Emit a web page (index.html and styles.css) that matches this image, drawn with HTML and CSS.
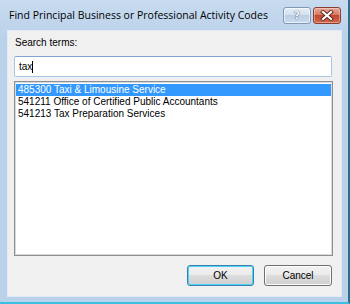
FILE: index.html
```html
<!DOCTYPE html>
<html>
<head>
<meta charset="utf-8">
<link rel="stylesheet" href="styles.css">
</head>
<body>
<div class="window">
  <div class="titlebar">
    <span class="title">Find Principal Business or Professional Activity Codes</span>
    <div class="caption-buttons">
      <div class="cap-btn help"><span class="help-glyph">?</span></div>
      <div class="cap-btn close">
        <svg width="14" height="11" viewBox="0 0 14 11">
          <path d="M3 2 L11 9 M11 2 L3 9" stroke="#5a2a20" stroke-width="4" stroke-linecap="square"/>
          <path d="M3 2 L11 9 M11 2 L3 9" stroke="#ffffff" stroke-width="2.2" stroke-linecap="square"/>
        </svg>
      </div>
    </div>
  </div>
  <div class="client">
    <div class="label">Search terms:</div>
    <div class="textbox"><span class="typed">tax</span><span class="caret"></span></div>
    <div class="listbox">
      <div class="item selected">485300 Taxi &amp; Limousine Service</div>
      <div class="item">541211 Office of Certified Public Accountants</div>
      <div class="item">541213 Tax Preparation Services</div>
    </div>
    <div class="buttons">
      <div class="btn default">OK</div>
      <div class="btn cancel">Cancel</div>
    </div>
  </div>
</div>
</body>
</html>
```
FILE: styles.css
```css
html, body {
  margin: 0;
  padding: 0;
  width: 350px;
  height: 304px;
  overflow: hidden;
  background: #bcd3ec;
}
.window {
  width: 350px;
  height: 304px;
  box-sizing: border-box;
  background: linear-gradient(#c8dbef, #bad1ea 40px, #bad1ea);
  border-right: 2px solid #2c6f8c;
  border-bottom: 2px solid #3cbfe0;
  padding: 0 6px 5px 7px;
  display: flex;
  flex-direction: column;
}
.titlebar {
  height: 30px;
  display: flex;
  justify-content: space-between;
  align-items: flex-start;
  padding-left: 2px;
  box-sizing: border-box;
}
.title {
  font-family: "Open Sans", "Noto Sans", sans-serif;
  font-size: 10.5px;
  line-height: 14px;
  padding-top: 8px;
  color: #000;
}
.caption-buttons {
  display: flex;
  gap: 2px;
  padding-top: 7px;
  margin-right: 1px;
}
.cap-btn {
  width: 28px;
  height: 17px;
  box-sizing: border-box;
  border-radius: 3px;
  display: flex;
  align-items: center;
  justify-content: center;
}
.help {
  border: 1px solid #7f98b5;
  background: linear-gradient(#e6eef8, #d3e0f0 45%, #bccfe6 50%, #c9daee);
  box-shadow: inset 0 0 0 1px rgba(255,255,255,0.6);
}
.help-glyph {
  font-family: "DejaVu Sans", sans-serif;
  font-weight: bold;
  font-size: 11px;
  line-height: 11px;
  color: #f4f7fb;
  text-shadow: 0 0 1px #4a5a70, 0 0 1px #4a5a70;
}
.close {
  border: 1px solid #8b3d2f;
  background: linear-gradient(#e9a796, #d77a63 45%, #c5472c 50%, #d06a4f);
  box-shadow: inset 0 0 0 1px rgba(255,255,255,0.35);
}
.client {
  flex: 1;
  background: #f0f0f0;
  border: 1px solid #e2ebf5;
  box-sizing: border-box;
  padding: 6px 8px 10px 6px;
  display: flex;
  flex-direction: column;
}
.label {
  font-family: "Liberation Sans", Arial, sans-serif;
  font-size: 10px;
  line-height: 12px;
  height: 12px;
  margin-left: 1px;
  margin-bottom: 7px;
  color: #000;
}
.textbox {
  height: 21px;
  margin-right: 1px;
  box-sizing: border-box;
  background: #fff;
  border: 1px solid #a8c6e4;
  border-top-color: #7fa6d0;
  border-radius: 2px;
  display: flex;
  align-items: center;
  padding-left: 4px;
  font-family: "Liberation Sans", Arial, sans-serif;
  font-size: 10px;
  color: #000;
}
.caret {
  width: 1px;
  height: 12px;
  background: #000;
}
.listbox {
  margin-top: 4px;
  height: 175px;
  box-sizing: border-box;
  background: #fff;
  border: 1px solid #8d8f92;
  box-shadow: inset 0 0 0 1px #d9d9d9;
  padding: 2px 1px;
  font-family: "Liberation Sans", Arial, sans-serif;
  font-size: 10px;
}
.item {
  height: 12px;
  line-height: 12px;
  padding-left: 2px;
  color: #000;
  white-space: nowrap;
}
.item.selected {
  background: #3399ff;
  color: #fff;
}
.buttons {
  margin-top: 9px;
  display: flex;
  justify-content: flex-end;
  gap: 10px;
  margin-right: 1px;
}
.btn {
  height: 21px;
  box-sizing: border-box;
  border: 1px solid #707070;
  border-radius: 3px;
  background: linear-gradient(#f2f2f2, #ebebeb 45%, #dddddd 50%, #cfcfcf);
  box-shadow: inset 0 0 0 1px #fcfcfc;
  font-family: "Liberation Sans", Arial, sans-serif;
  font-size: 10px;
  display: flex;
  align-items: center;
  justify-content: center;
  color: #000;
}
.btn.default {
  width: 67px;
  border-color: #3c7fb1;
  box-shadow: inset 0 0 0 1px #48d4f6;
}
.btn.cancel {
  width: 68px;
}
```
